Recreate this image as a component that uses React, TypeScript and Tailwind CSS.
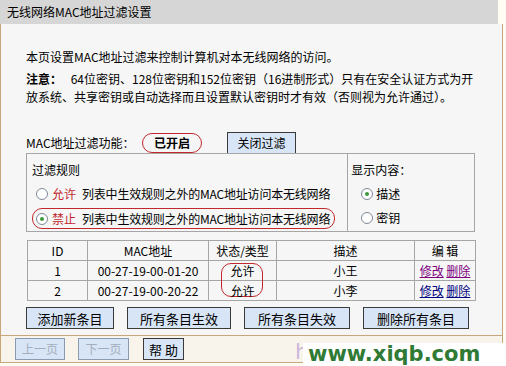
import React from 'react'

const cn = "font-['Noto_Sans_CJK_SC',sans-serif]"

function Radio({ checked }: { checked?: boolean }) {
  return (
    <span className="inline-flex h-[12px] w-[12px] shrink-0 items-center justify-center rounded-full border border-[#7d8a96] bg-white">
      {checked && <span className="h-[4px] w-[4px] rounded-full bg-[#3c9a3c]" />}
    </span>
  )
}

function Btn({ label, className }: { label: string; className: string }) {
  return (
    <div
      className={`flex h-[22px] shrink-0 items-center justify-center border bg-[#d7e5f6] leading-none whitespace-nowrap ${className}`}
    >
      {label}
    </div>
  )
}

const rows = [
  { id: '1', mac: '00-27-19-00-01-20', name: '小王', link: 'text-[#800080]' },
  { id: '2', mac: '00-27-19-00-20-22', name: '小李', link: 'text-[#000080]' },
]

export default function App() {
  return (
    <div className={`relative h-[366px] w-[506px] overflow-hidden bg-[#fffcf3] text-[12px] leading-[18px] text-black ${cn}`}>
      <div className="w-[503px]">
        <div className="h-[24px] w-[498px] bg-[#d6d6d6] pl-[7px] text-[12px] leading-[24px]">
          无线网络MAC地址过滤设置
        </div>

        <div className="h-[312px] border-x border-b border-[#c9a679] bg-[#f6f6f6] pt-[24px] pl-[25px]">
          <p className="leading-[18px]">本页设置MAC地址过滤来控制计算机对本无线网络的访问。</p>
          <p className="mt-[4px] leading-[18px] whitespace-nowrap">
            <b className="mr-[6px]">注意：</b> 64位密钥、128位密钥和152位密钥（16进制形式）只有在安全认证方式为开
            <br />
            放系统、共享密钥或自动选择而且设置默认密钥时才有效（否则视为允许通过）。
          </p>

          <div className="mt-[27px] flex h-[20px] items-center">
            <span className="w-[116px] whitespace-nowrap">MAC地址过滤功能：</span>
            <span className="flex h-[20px] w-[60px] items-center justify-center rounded-full border border-[#c0282d] font-bold">
              已开启
            </span>
            <Btn label="关闭过滤" className="ml-[25px] h-[19px] w-[69px] border-[#3a3a3a] text-[12px] text-black" />
          </div>

          <div className="flex h-[79px] w-[449px]">
            <div className="w-[323px] border border-[#a6a6a6] pl-[5px]">
              <div className="mt-[8px] leading-[16px]">过滤规则</div>
              <div className="mt-[6px] ml-[4px] flex h-[20px] items-center whitespace-nowrap">
                <Radio />
                <span className="ml-[4px] text-[#c0282d]">允许</span>
                <span className="ml-[6px] tracking-[-0.2px]">列表中生效规则之外的MAC地址访问本无线网络</span>
              </div>
              <div className="mt-[4px] flex h-[21px] w-[303px] items-center rounded-[10px] border border-[#c0282d] pl-[3px] whitespace-nowrap">
                <Radio checked />
                <span className="ml-[4px] text-[#c0282d]">禁止</span>
                <span className="ml-[6px] tracking-[-0.2px]">列表中生效规则之外的MAC地址访问本无线网络</span>
              </div>
            </div>
            <div className="w-[127px] border border-l-0 border-[#a6a6a6] pl-[3px]">
              <div className="mt-[8px] leading-[16px]">显示内容：</div>
              <div className="mt-[6px] ml-[10px] flex h-[20px] items-center">
                <Radio checked />
                <span className="ml-[3px]">描述</span>
              </div>
              <div className="mt-[4px] ml-[10px] flex h-[20px] items-center">
                <Radio />
                <span className="ml-[3px]">密钥</span>
              </div>
            </div>
          </div>

          <table className="mt-[8px] ml-[1px] border-collapse border border-[#a6a6a6] text-center leading-none">
            <thead>
              <tr className="h-[20px]">
                <th className="w-[60px] border border-[#a6a6a6] font-normal">ID</th>
                <th className="w-[121px] border border-[#a6a6a6] font-normal">MAC地址</th>
                <th className="w-[68px] border border-[#a6a6a6] font-normal">状态/类型</th>
                <th className="w-[138px] border border-[#a6a6a6] font-normal">描述</th>
                <th className="w-[61px] border border-[#a6a6a6] font-normal">编 辑</th>
              </tr>
            </thead>
            <tbody>
              {rows.map((r, i) => (
                <tr key={r.id} className="h-[20px]">
                  <td className="border border-[#a6a6a6]">{r.id}</td>
                  <td className="border border-[#a6a6a6]">{r.mac}</td>
                  <td className="relative border border-[#a6a6a6]">
                    {i === 0 && (
                      <span className="absolute top-[2px] left-[12px] h-[34px] w-[42px] rounded-[10px] border border-[#c0282d]" />
                    )}
                    允许
                  </td>
                  <td className="border border-[#a6a6a6]">{r.name}</td>
                  <td className="border border-[#a6a6a6]">
                    <span className={`underline ${r.link}`}>修改</span>{' '}
                    <span className={`underline ${r.link}`}>删除</span>
                  </td>
                </tr>
              ))}
            </tbody>
          </table>

          <div className="mt-[6px] flex gap-[13px]">
            <Btn label="添加新条目" className="w-[88px] border-[#3a3a3a] text-[13px] text-black" />
            <Btn label="所有条目生效" className="w-[104px] border-[#3a3a3a] text-[13px] text-black" />
            <Btn label="所有条目失效" className="w-[106px] border-[#3a3a3a] text-[13px] text-black" />
            <Btn label="删除所有条目" className="w-[106px] border-[#3a3a3a] text-[13px] text-black" />
          </div>
        </div>

        <div className="flex h-[27px] items-center gap-[13px] border-x border-b border-[#c9a679] bg-[#f8f4ec] pl-[14px]">
          <Btn label="上一页" className="h-[17px] w-[50px] border-[#8a9ab0] text-[12px] text-[#a3adbd]" />
          <Btn label="下一页" className="h-[17px] w-[51px] border-[#8a9ab0] text-[12px] text-[#a3adbd]" />
          <Btn label="帮 助" className="ml-[1px] h-[17px] w-[41px] border-[#3a3a3a] text-[13px] text-black" />
        </div>
      </div>

      <span className="absolute top-[341px] left-[295px] font-['DejaVu_Sans',sans-serif] text-[22px] leading-none text-[#cdb8dc]">
        h
      </span>
      <div className="absolute top-[343px] left-[303px] flex h-[23px] w-[203px] items-center bg-white pl-[5px] font-['DejaVu_Sans',sans-serif] text-[21px] leading-none font-bold text-[#2f7a34]">
        www.xiqb.com
      </div>
    </div>
  )
}
